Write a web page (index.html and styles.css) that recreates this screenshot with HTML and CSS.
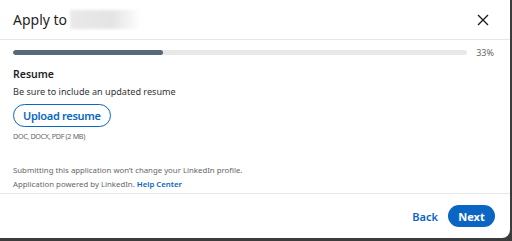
FILE: index.html
```html
<!DOCTYPE html>
<html>
<head>
<meta charset="utf-8">
<link rel="stylesheet" href="styles.css">
</head>
<body>
<div class="modal">
  <header class="head">
    <h1 class="title">Apply to</h1>
    <span class="blur"></span>
    <button class="close" aria-label="Dismiss">
      <svg width="12" height="12" viewBox="0 0 12 12"><path d="M1 1 L11 11 M11 1 L1 11" stroke="#1f1f1f" stroke-width="1.4" fill="none"/></svg>
    </button>
  </header>
  <main class="body">
    <div class="progress">
      <div class="track"><div class="fill" style="width:33%"></div></div>
      <span class="pct">33%</span>
    </div>
    <h2 class="sec">Resume</h2>
    <p class="desc">Be sure to include an updated resume</p>
    <button class="upload">Upload resume</button>
    <p class="types">DOC, DOCX, PDF (2 MB)</p>
    <p class="note">Submitting this application won’t change your LinkedIn profile.</p>
    <p class="note">Application powered by LinkedIn. <a class="help">Help Center</a></p>
  </main>
  <footer class="foot">
    <button class="back">Back</button>
    <button class="next">Next</button>
  </footer>
</div>
</body>
</html>
```
FILE: styles.css
```css
html, body { margin: 0; padding: 0; }
body {
  background: #3c3c3c;
  width: 512px;
  height: 241px;
  overflow: hidden;
  font-family: "Noto Sans", "Open Sans", sans-serif;
}
.modal {
  width: 510px;
  height: 238px;
  background: #fff;
  border-bottom-right-radius: 8px;
  display: flex;
  flex-direction: column;
  overflow: hidden;
}
.head {
  height: 40px;
  flex: none;
  display: flex;
  align-items: center;
  padding-left: 13px;
  border-bottom: 1px solid #e6e6e6;
  box-sizing: border-box;
}
.title {
  margin: 0;
  font-size: 14px;
  font-weight: 400;
  color: #1f1f1f;
}
.blur {
  width: 71px;
  height: 19px;
  margin-left: 3px;
  background: linear-gradient(90deg, #e9e9e9 0%, #e4e4e4 60%, #ffffff 100%);
  filter: blur(1.5px);
}
.close {
  margin-left: auto;
  margin-right: 15px;
  width: 24px;
  height: 24px;
  border: 0;
  background: none;
  padding: 0;
  display: flex;
  align-items: center;
  justify-content: center;
}
.body {
  flex: 1;
  padding: 10px 16px 0 13px;
  border-bottom: 1px solid #e6e6e6;
}
.progress {
  display: flex;
  align-items: center;
  gap: 9px;
  height: 5px;
}
.track {
  flex: 1;
  height: 5px;
  background: #e8e8e8;
  border-radius: 3px;
  overflow: hidden;
}
.fill {
  height: 100%;
  background: #56687a;
  border-radius: 3px;
}
.pct {
  font-size: 9px;
  color: #666;
}
.sec {
  margin: 12px 0 0;
  font-size: 10.5px;
  font-weight: 600;
  color: #1f1f1f;
  line-height: 15px;
}
.desc {
  margin: 3px 0 0;
  font-size: 9.1px;
  color: #333;
  line-height: 14px;
}
.upload {
  margin-top: 5px;
  height: 23px;
  padding: 0 9px;
  border: 1px solid #0a66c2;
  border-radius: 12px;
  background: #fff;
  color: #0a66c2;
  font-family: inherit;
  font-size: 11px;
  letter-spacing: -0.3px;
  font-weight: 600;
}
.types {
  margin: 3px 0 0;
  font-size: 7.2px;
  letter-spacing: -0.35px;
  color: #666;
  line-height: 12px;
}
.note {
  margin: 0;
  font-size: 7.8px;
  color: #666;
  line-height: 14px;
}
.types + .note { margin-top: 21px; }
.help {
  color: #0a66c2;
  font-weight: 600;
}
.foot {
  flex: none;
  height: 44px;
  display: flex;
  justify-content: flex-end;
  align-items: center;
  gap: 10px;
  padding-right: 15px;
}
.back {
  border: 0;
  background: none;
  color: #0a66c2;
  font-family: inherit;
  font-size: 11px;
  font-weight: 600;
  padding: 0;
}
.next {
  width: 47px;
  height: 22px;
  border: 0;
  border-radius: 11px;
  background: #0a66c2;
  color: #fff;
  font-family: inherit;
  font-size: 11px;
  font-weight: 700;
  padding: 0;
}
```
